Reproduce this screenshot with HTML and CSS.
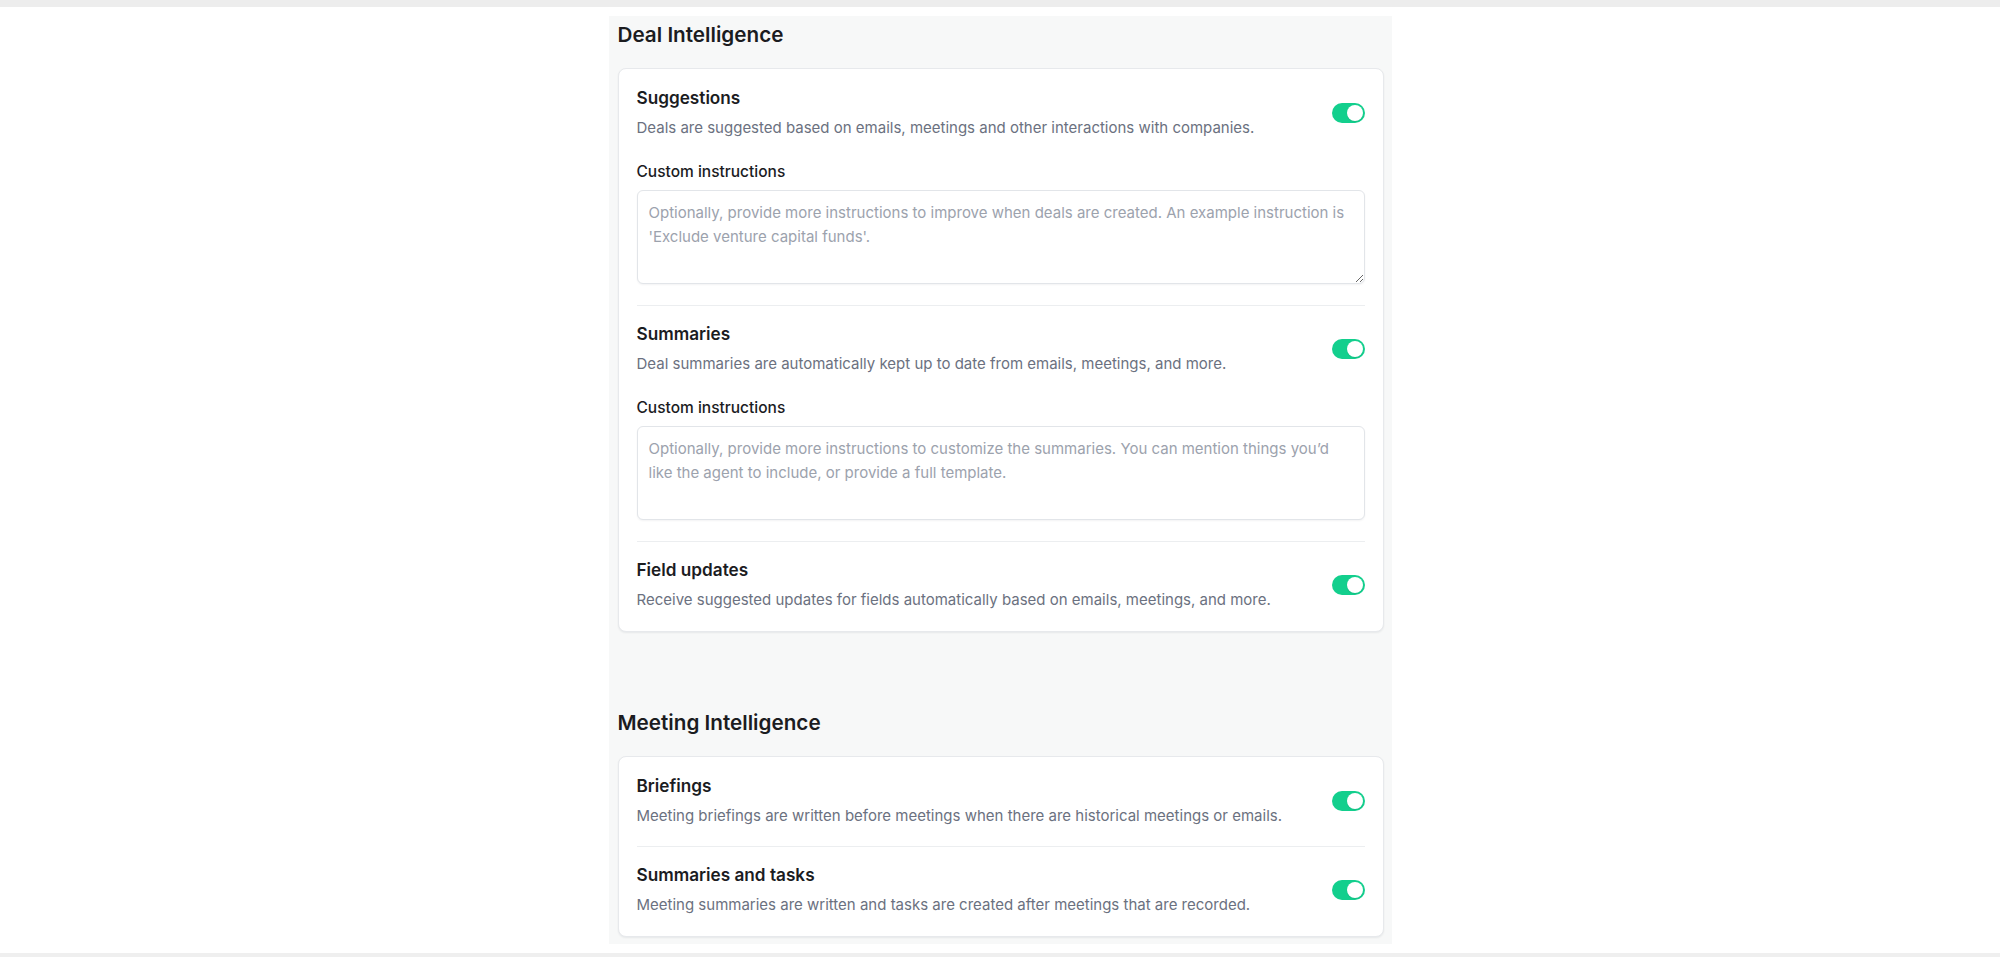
FILE: index.html
```html
<!DOCTYPE html>
<html lang="en">
<head>
<meta charset="utf-8">
<title>Intelligence settings</title>
<link rel="stylesheet" href="styles.css">
</head>
<body>
<div class="topbar"></div>
<div class="page">
  <main class="panel">
    <section class="section">
      <h2 class="section-title">Deal Intelligence</h2>
      <div class="card">
        <div class="item item-tall">
          <div class="row">
            <div class="text">
              <div class="title">Suggestions</div>
              <div class="desc">Deals are suggested based on emails, meetings and other interactions with companies.</div>
            </div>
            <span class="toggle"><span class="knob"></span></span>
          </div>
          <label class="label">Custom instructions</label>
          <textarea class="field" placeholder="Optionally, provide more instructions to improve when deals are created. An example instruction is 'Exclude venture capital funds'."></textarea>
        </div>
        <div class="item item-tall">
          <div class="row">
            <div class="text">
              <div class="title">Summaries</div>
              <div class="desc">Deal summaries are automatically kept up to date from emails, meetings, and more.</div>
            </div>
            <span class="toggle"><span class="knob"></span></span>
          </div>
          <label class="label">Custom instructions</label>
          <textarea class="field field-fixed" placeholder="Optionally, provide more instructions to customize the summaries. You can mention things you’d like the agent to include, or provide a full template."></textarea>
        </div>
        <div class="item">
          <div class="row">
            <div class="text">
              <div class="title">Field updates</div>
              <div class="desc">Receive suggested updates for fields automatically based on emails, meetings, and more.</div>
            </div>
            <span class="toggle"><span class="knob"></span></span>
          </div>
        </div>
      </div>
    </section>
    <section class="section">
      <h2 class="section-title">Meeting Intelligence</h2>
      <div class="card">
        <div class="item">
          <div class="row">
            <div class="text">
              <div class="title">Briefings</div>
              <div class="desc">Meeting briefings are written before meetings when there are historical meetings or emails.</div>
            </div>
            <span class="toggle"><span class="knob"></span></span>
          </div>
        </div>
        <div class="item">
          <div class="row">
            <div class="text">
              <div class="title">Summaries and tasks</div>
              <div class="desc">Meeting summaries are written and tasks are created after meetings that are recorded.</div>
            </div>
            <span class="toggle"><span class="knob"></span></span>
          </div>
        </div>
      </div>
    </section>
  </main>
</div>
<div class="bottombar"></div>
</body>
</html>
```

FILE: styles.css
```css
* { box-sizing: border-box; }

html, body {
  margin: 0;
  padding: 0;
  height: 957px;
  overflow: hidden;
  background: #ffffff;
  font-family: Inter, "Noto Sans", "Liberation Sans", sans-serif;
  color: #1d1f23;
}

body {
  display: flex;
  flex-direction: column;
}

.topbar {
  height: 7px;
  background: #ededed;
  flex: none;
}

.page {
  flex: 1;
  display: flex;
  justify-content: center;
  padding-top: 9px;
  padding-bottom: 9px;
  min-height: 0;
}

.panel {
  width: 783px;
  height: 928px;
  overflow: hidden;
  background: #f7f8f8;
  padding: 5px 8px 0 9px;
}

.section {
  margin-bottom: 77px;
}

.section-title {
  margin: 0 0 19px 0;
  font-size: 20.7px;
  line-height: 28px;
  font-weight: 600;
  color: #1b1c1f;
}

.card {
  background: #ffffff;
  border: 1px solid #e7e9ec;
  border-radius: 8px;
  box-shadow: 0 1px 2px rgba(16, 24, 40, 0.07);
  padding: 1px 18px 1px 18px;
}

.item {
  padding: 18px 0 20px 0;
  border-bottom: 1px solid #eceef0;
}

.item-tall {
  padding-bottom: 21px;
}

.item:last-child {
  border-bottom: none;
}

.row {
  display: flex;
  align-items: center;
  justify-content: space-between;
  gap: 16px;
}

.text {
  display: flex;
  flex-direction: column;
  gap: 10px;
}

.title {
  font-size: 17.2px;
  line-height: 20px;
  font-weight: 600;
  color: #1b1c1f;
}

.desc {
  font-size: 15px;
  line-height: 20px;
  color: #6b7180;
}

.toggle {
  flex: none;
  width: 33px;
  height: 20px;
  border-radius: 10px;
  background: #13cf8d;
  display: flex;
  align-items: center;
  justify-content: flex-end;
  padding: 0 2px;
}

.knob {
  width: 16px;
  height: 16px;
  border-radius: 50%;
  background: #ffffff;
  box-shadow: 0 1px 1px rgba(0, 0, 0, 0.08);
}

.label {
  display: block;
  margin-top: 24px;
  font-size: 15.5px;
  line-height: 20px;
  font-weight: 500;
  color: #1b1c1f;
}

.field {
  display: block;
  width: 100%;
  height: 94px;
  margin-top: 8px;
  padding: 10px 11px;
  border: 1px solid #e2e5e9;
  border-radius: 6px;
  box-shadow: 0 1px 2px rgba(16, 24, 40, 0.05);
  font-family: Inter, "Noto Sans", "Liberation Sans", sans-serif;
  font-size: 15px;
  line-height: 24px;
  color: #1d1f23;
  background: #ffffff;
  resize: vertical;
  outline: none;
}

.field-fixed {
  resize: none;
}

.field::placeholder {
  color: #9ca2ad;
}

.bottombar {
  height: 4px;
  background: #efefef;
  flex: none;
}
```
